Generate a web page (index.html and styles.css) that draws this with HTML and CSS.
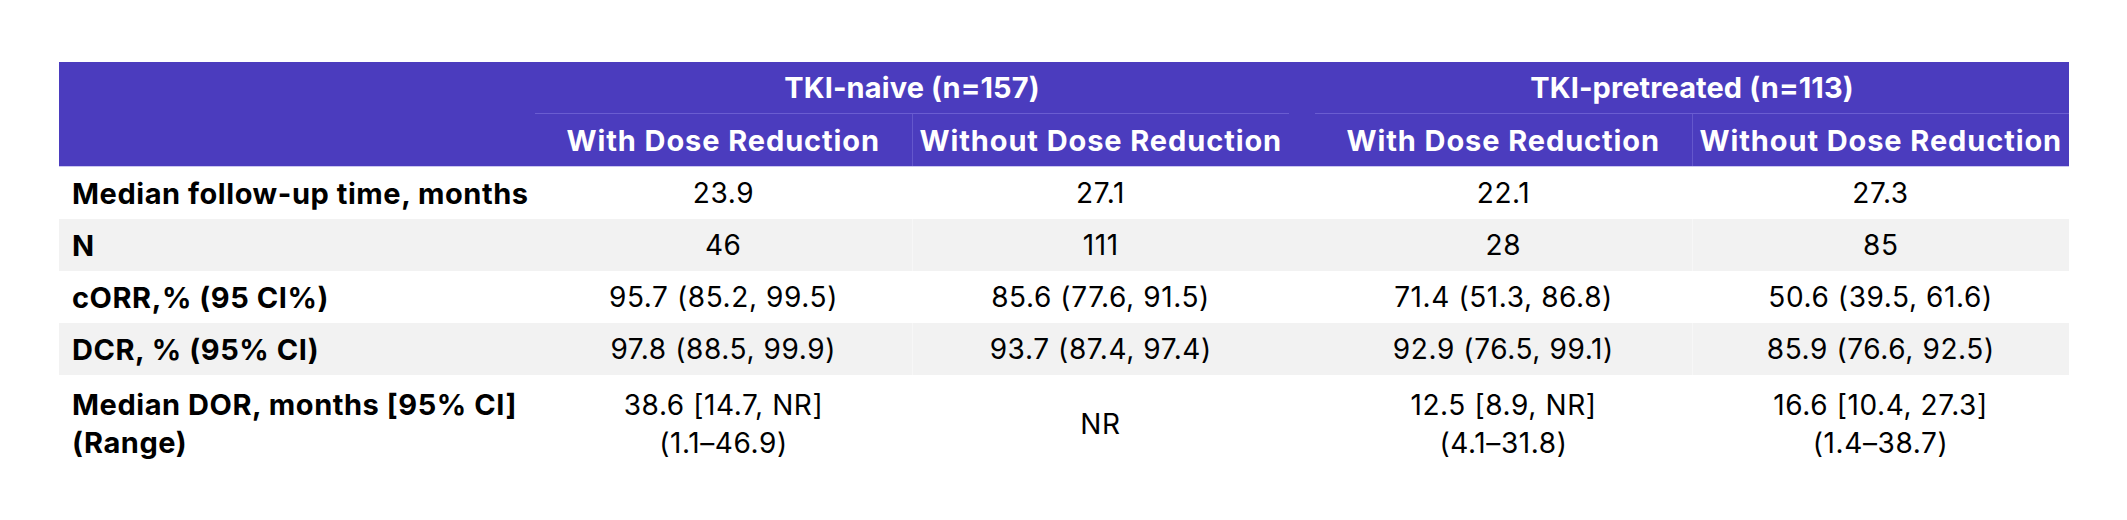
FILE: index.html
```html
<!DOCTYPE html>
<html lang="en">
<head>
<meta charset="utf-8">
<title>Dose reduction outcomes</title>
<link rel="stylesheet" href="styles.css">
</head>
<body>
<main class="page">
  <table class="results">
    <colgroup>
      <col class="c-label">
      <col class="c-val">
      <col class="c-val">
      <col class="c-gap">
      <col class="c-val">
      <col class="c-val">
    </colgroup>
    <thead>
      <tr class="group-row">
        <th class="blank"></th>
        <th class="group" colspan="2">TKI-naive (n=157)</th>
        <th class="gap"></th>
        <th class="group" colspan="2">TKI-pretreated (n=113)</th>
      </tr>
      <tr class="sub-row">
        <th class="blank"></th>
        <th class="sub">With Dose Reduction</th>
        <th class="sub sep">Without Dose Reduction</th>
        <th class="gap"></th>
        <th class="sub">With Dose Reduction</th>
        <th class="sub sep">Without Dose Reduction</th>
      </tr>
    </thead>
    <tbody>
      <tr class="row">
        <th class="label" scope="row">Median follow-up time, months</th>
        <td>23.9</td>
        <td class="sep">27.1</td>
        <td class="gap"></td>
        <td>22.1</td>
        <td class="sep">27.3</td>
      </tr>
      <tr class="row shade">
        <th class="label" scope="row">N</th>
        <td>46</td>
        <td class="sep">111</td>
        <td class="gap"></td>
        <td>28</td>
        <td class="sep">85</td>
      </tr>
      <tr class="row">
        <th class="label" scope="row">cORR,% (95 CI%)</th>
        <td>95.7 (85.2, 99.5)</td>
        <td class="sep">85.6 (77.6, 91.5)</td>
        <td class="gap"></td>
        <td>71.4 (51.3, 86.8)</td>
        <td class="sep">50.6 (39.5, 61.6)</td>
      </tr>
      <tr class="row shade">
        <th class="label" scope="row">DCR, % (95% CI)</th>
        <td>97.8 (88.5, 99.9)</td>
        <td class="sep">93.7 (87.4, 97.4)</td>
        <td class="gap"></td>
        <td>92.9 (76.5, 99.1)</td>
        <td class="sep">85.9 (76.6, 92.5)</td>
      </tr>
      <tr class="row tall">
        <th class="label" scope="row">Median DOR, months [95% CI]<br>(Range)</th>
        <td>38.6 [14.7, NR]<br>(1.1–46.9)</td>
        <td class="sep">NR</td>
        <td class="gap"></td>
        <td>12.5 [8.9, NR]<br>(4.1–31.8)</td>
        <td class="sep">16.6 [10.4, 27.3]<br>(1.4–38.7)</td>
      </tr>
    </tbody>
  </table>
</main>
</body>
</html>
```

FILE: styles.css
```css
html, body {
  margin: 0;
  padding: 0;
  background: #ffffff;
}

.page {
  padding: 62px 60px 0 59px;
}

.results {
  width: 2008px;
  border-collapse: collapse;
  table-layout: fixed;
  font-family: Inter, "Liberation Sans", sans-serif;
  color: #000000;
}

.c-label { width: 476px; }
.c-val { width: 377px; }
.c-gap { width: 26px; }

.results thead tr {
  background: #4b3cbe;
  color: #ffffff;
}

.results th,
.results td {
  padding: 0;
  font-size: 28px;
  letter-spacing: 0.6px;
  text-align: center;
  vertical-align: middle;
  white-space: nowrap;
}

.results thead th {
  font-size: 29px;
  letter-spacing: 0.9px;
  font-weight: 700;
}

.group-row th {
  height: 51px;
}

.results .group-row .group {
  letter-spacing: 0.1px;
  border-bottom: 1px solid #6a5dd1;
}

.sub-row th {
  height: 52px;
  border-bottom: 1px solid #cbc6f0;
}

.sub-row .sep {
  border-left: 1px solid #6457cc;
}

.row td,
.row .label {
  height: 52px;
}

.row .label {
  text-align: left;
  padding-left: 13px;
  font-size: 29px;
  letter-spacing: 0.55px;
  font-weight: 700;
}

.row td {
  font-weight: 400;
}

.shade {
  background: #f2f2f2;
}

.shade .sep {
  border-left: 1px solid #f7f7f7;
}

.tall td,
.tall .label {
  height: 98px;
  line-height: 38px;
}
```
